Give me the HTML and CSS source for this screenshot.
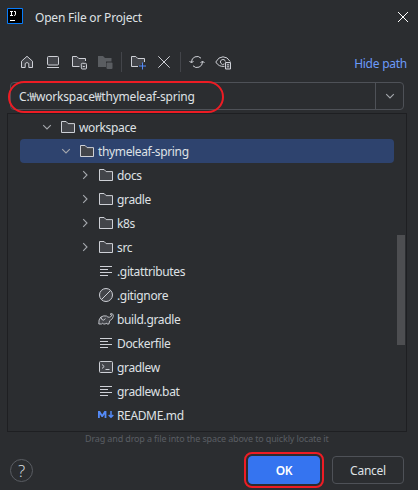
FILE: index.html
```
<!DOCTYPE html>
<html lang="en">
<head>
<meta charset="utf-8">
<title>Open File or Project</title>
<link rel="stylesheet" href="styles.css">
</head>
<body>
<svg class="defs" width="0" height="0" aria-hidden="true">
  <symbol id="folder" viewBox="0 0 16 16"><path d="M1.500 2.500h4.600l2 2.100h6.400v8.900h-13z" fill="#43454a" stroke="#ced0d6"/></symbol>
  <symbol id="down" viewBox="0 0 16 16"><path d="M4.200 6.200 8 10l3.800-3.800" fill="none" stroke="#a5a8ad" stroke-width="1.100"/></symbol>
  <symbol id="right" viewBox="0 0 16 16"><path d="M6.200 4.200 10 8l-3.800 3.800" fill="none" stroke="#a5a8ad" stroke-width="1.100"/></symbol>
  <symbol id="lines" viewBox="0 0 16 16"><path d="M2 3.500h12M2 6.500h8M2 9.500h12M2 12.500h8" fill="none" stroke="#ced0d6"/></symbol>
</svg>
<div class="dialog">
  <header class="titlebar">
    <svg class="logo" viewBox="0 0 16 16"><path d="M.5.5h15v15H.5z" fill="#000" stroke="#087cfa"/><path d="M3 3.500h3M4.500 3.500v4M3 7.500h3M7 3.500h1.500v2.700q0 1.300-1.300 1.300H7M3 12.500h5" fill="none" stroke="#fff"/></svg>
    <h1 class="title">Open File or Project</h1>
    <svg class="close" viewBox="0 0 12 12"><path d="m1 1 10 10M11 1 1 11" stroke="#fff" fill="none"/></svg>
  </header>
  <div class="toolbar">
    <svg class="tool" viewBox="0 0 16 16"><path d="M2.500 7.200 8 2.300l5.500 4.900v6.300H9.800V9.500Q8 7.500 6.200 9.500v4H2.500z" fill="#43454a" stroke="#ced0d6"/></svg>
    <svg class="tool" viewBox="0 0 16 16"><rect x="2.500" y="2.500" width="11" height="8.500" rx="1" fill="#43454a" stroke="#ced0d6"/><path d="M2 13.500h12" stroke="#ced0d6"/></svg>
    <svg class="tool" viewBox="0 0 16 16"><path d="M8.500 12.500H1.500v-10h4.300l2 2h6.700V7" fill="#43454a" stroke="#ced0d6"/><rect x="10.300" y="9.300" width="5.200" height="5.700" rx="1" fill="#43454a" stroke="#ced0d6"/><path d="M11.800 12.500h2" stroke="#ced0d6"/></svg>
    <svg class="tool" viewBox="0 0 16 16"><path d="M1 2h5l2 2h6.500v3.500H9V13H1z" fill="#5a5d61"/><rect x="9.500" y="8.500" width="6" height="6.500" rx="1" fill="#5a5d61"/></svg>
    <i class="separator"></i>
    <svg class="tool" viewBox="0 0 16 16"><path d="M8 12.500H1.500v-10h4.300l2 2h6.700V8" fill="#43454a" stroke="#ced0d6"/><path d="M12.500 8.500v7M9 12h7" stroke="#548af7"/></svg>
    <svg class="tool" viewBox="0 0 16 16"><path d="m2.300 2.300 11.400 11.400M13.700 2.300 2.300 13.700" stroke="#ced0d6"/></svg>
    <i class="separator"></i>
    <svg class="tool" viewBox="0 0 16 16"><path d="M2.500 8.500V8A5.500 5.500 0 0 1 12 4.200M13.500 7.500V8A5.500 5.500 0 0 1 4 11.800M.5 7l2 2 2-2M11.500 9l2-2 2 2" fill="none" stroke="#ced0d6"/></svg>
    <svg class="tool" viewBox="0 0 16 16"><path d="M9.500 12.400Q3.600 13 .8 8 3.500 2.800 8 2.800T15.200 7.500M9.500 9.900A2.500 2.500 0 1 1 10.400 7.500" fill="none" stroke="#ced0d6"/><path d="M10.500 8.500h5v6.500h-5zM12 10.800h2M12 12.800h2" fill="#43454a" stroke="#ced0d6"/></svg>
    <a class="hide-path">Hide path</a>
  </div>
  <div class="path-field">
    <span class="path-text">C:<span class="won">₩</span>workspace<span class="won">₩</span>thymeleaf-spring</span>
    <span class="dropdown"><svg class="icon" viewBox="0 0 16 16"><use href="#down"/></svg></span>
    <i class="path-mark"></i>
  </div>
  <div class="tree">
    <div class="row level-0"><svg class="icon"><use href="#down"/></svg><svg class="icon"><use href="#folder"/></svg><span>workspace</span></div>
    <div class="row level-1 selected"><svg class="icon"><use href="#down"/></svg><svg class="icon"><use href="#folder"/></svg><span>thymeleaf-spring</span></div>
    <div class="row level-2"><svg class="icon"><use href="#right"/></svg><svg class="icon"><use href="#folder"/></svg><span>docs</span></div>
    <div class="row level-2"><svg class="icon"><use href="#right"/></svg><svg class="icon"><use href="#folder"/></svg><span>gradle</span></div>
    <div class="row level-2"><svg class="icon"><use href="#right"/></svg><svg class="icon"><use href="#folder"/></svg><span>k8s</span></div>
    <div class="row level-2"><svg class="icon"><use href="#right"/></svg><svg class="icon"><use href="#folder"/></svg><span>src</span></div>
    <div class="row file"><svg class="icon"><use href="#lines"/></svg><span>.gitattributes</span></div>
    <div class="row file"><svg class="icon" viewBox="0 0 16 16"><circle cx="8" cy="8" r="6.500" fill="#43454a" stroke="#ced0d6"/><path d="m3.500 12.500 9-9" stroke="#ced0d6"/></svg><span>.gitignore</span></div>
    <div class="row file"><svg class="icon" viewBox="0 0 16 16"><path d="M.8 13Q.5 8.500 2.800 6 5.500 4.300 8.500 5L11 7.500l2-.5-1.500 3-.7 3H9q-.8-1.800-1.800 0H5.300q-.8-1.800-1.800 0z" fill="#43454a"/><path d="M.8 13Q.4 8.500 2.800 6 5.500 4.300 8.500 5q1.300 1.700 3.200 1.200 2.200-.6 2.100-2.200-.4-1-1.600-.3M12 3.200q1.200-1.100 2.400-.4 1.300 1.100.8 3-.9 2.700-3.500 4L10.900 13H9q-.8-1.800-1.800 0H5.300q-.8-1.800-1.800 0H.8M3 6.200q.3 3 2.500 3l2-1.600" fill="none" stroke="#ced0d6" stroke-width=".9"/></svg><span>build.gradle</span></div>
    <div class="row file"><svg class="icon"><use href="#lines"/></svg><span>Dockerfile</span></div>
    <div class="row file"><svg class="icon" viewBox="0 0 16 16"><rect x="1.500" y="2.500" width="13" height="11" rx="1" fill="#43454a" stroke="#ced0d6"/><path d="m4 5.500 2.200 2L4 9.500M7.500 10.500h4" fill="none" stroke="#ced0d6"/></svg><span>gradlew</span></div>
    <div class="row file"><svg class="icon"><use href="#lines"/></svg><span>gradlew.bat</span></div>
    <div class="row file"><svg class="icon" viewBox="0 0 16 16"><path d="M0 11V4h2l2.200 3.600L6.400 4h2v7H6.600V7.200L4.800 10H3.600L1.800 7.200V11z" fill="#548af7"/><path d="M13 4v6.500M10.700 8 13 10.300 15.300 8" fill="none" stroke="#548af7" stroke-width="1.500"/></svg><span>README.md</span></div>
    <i class="scrollbar"></i>
  </div>
  <p class="hint">Drag and drop a file into the space above to quickly locate it</p>
  <footer class="actions">
    <button class="help">?</button>
    <button class="button ok">OK</button>
    <button class="button cancel">Cancel</button>
  </footer>
</div>
</body>
</html>
```
FILE: styles.css
```
* { box-sizing: border-box; }
body { margin: 0; background: #2b2d30; color: #dfe1e5; font: 12px/24px "Noto Sans", "Noto Sans CJK KR", sans-serif; }
.defs { position: absolute; }
.dialog { width: 418px; height: 490px; overflow: hidden; display: flex; flex-direction: column; }
.titlebar { height: 46px; padding: 8px 9px 0 7px; display: flex; align-items: flex-start; }
.logo { width: 16px; height: 16px; margin-right: 12px; }
.title { margin: -2px 0 0; font-size: 12px; font-weight: 400; line-height: 24px; letter-spacing: -.2px; flex: 1; }
.close { width: 12px; height: 12px; margin-top: 3px; }
.toolbar { height: 36px; padding: 0 11px 4px 19px; display: flex; align-items: center; }
.tool { width: 16px; height: 16px; margin-right: 10px; flex: none; }
.separator { width: 1px; height: 20px; margin: 0 8px 0 -2px; background: #43454a; }
.hide-path { margin-left: auto; padding-top: 3px; color: #6b9bfa; letter-spacing: -.25px; }
.path-field { position: relative; height: 28px; margin: 0 14px 0 10px; border: 1px solid #4e5157; border-radius: 4px; display: flex; }
.path-text { flex: 1; padding-left: 8px; line-height: 26px; letter-spacing: -.18px; }
.won { font-family: "Noto Sans CJK KR", sans-serif; }
.dropdown { width: 28px; border-left: 1px solid #4e5157; display: flex; align-items: center; justify-content: center; }
.path-mark { position: absolute; left: -3px; top: -2px; width: 216px; height: 32px; border: 2px solid #ed1c24; border-radius: 16px; }
.tree { position: relative; height: 319px; margin: 3px 11px 0 7px; padding: 1px 12px 0 12px; border: 1px solid #1e1f22; }
.row { height: 24px; display: flex; align-items: center; border-radius: 4px; letter-spacing: -.36px; }
.row span { padding-top: 2px; }
.icon { width: 16px; height: 16px; flex: none; }
.row .icon { margin-right: 3px; }
.row .icon + .icon { margin-left: 2px; }
.level-0 { padding-left: 19px; }
.level-1 { padding-left: 38px; }
.level-2 { padding-left: 57px; }
.file { padding-left: 78px; }
.selected { background: #2e436e; }
.scrollbar { position: absolute; left: 389px; top: 121px; width: 8px; height: 110px; background: #4d4e51; }
.hint { margin: 0; padding-left: 85px; color: #5a5d63; font-size: 9px; line-height: 14px; letter-spacing: -.14px; white-space: nowrap; }
.actions { display: flex; height: 44px; padding: 10px 14px 0 10px; }
button { padding: 0; font: inherit; color: inherit; background: none; }
.help { width: 23px; height: 23px; margin: 3px auto 0 0; border: 1px solid #5a5d63; border-radius: 50%; font-family: "Open Sans", sans-serif; font-size: 17px; font-weight: 300; line-height: 21px; }
.button { height: 28px; width: 72px; padding-top: 2px; border: 1px solid #4e5157; border-radius: 4px; letter-spacing: -.25px; }
.ok { margin-right: 12px; background: #3574f0; border-color: #3574f0; color: #fff; font-weight: 600; outline: 2px solid #ed1c24; outline-offset: 2px; }
```
